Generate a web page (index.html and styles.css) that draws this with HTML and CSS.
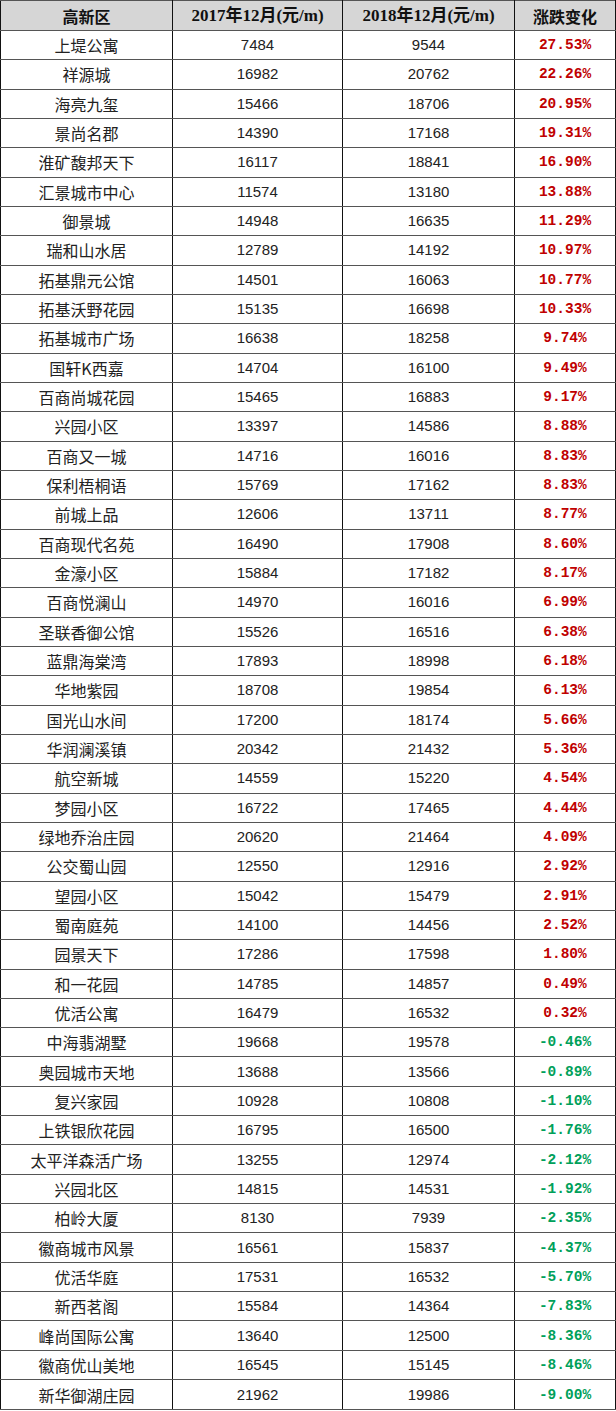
FILE: index.html
```html
<!DOCTYPE html>
<html lang="zh-CN">
<head>
<meta charset="utf-8">
<title>高新区房价涨跌</title>
<link rel="stylesheet" href="styles.css">
</head>
<body>
<table class="price-table">
  <colgroup>
    <col class="c-name"><col class="c-y1"><col class="c-y2"><col class="c-chg">
  </colgroup>
  <thead>
    <tr><th class="h-cn">高新区</th><th class="h-year">2017年12月(元/m)</th><th class="h-year">2018年12月(元/m)</th><th class="h-cn">涨跌变化</th></tr>
  </thead>
  <tbody>
    <tr><td class="name">上堤公寓</td><td class="num">7484</td><td class="num">9544</td><td class="pct up">27.53%</td></tr>
    <tr><td class="name">祥源城</td><td class="num">16982</td><td class="num">20762</td><td class="pct up">22.26%</td></tr>
    <tr><td class="name">海亮九玺</td><td class="num">15466</td><td class="num">18706</td><td class="pct up">20.95%</td></tr>
    <tr><td class="name">景尚名郡</td><td class="num">14390</td><td class="num">17168</td><td class="pct up">19.31%</td></tr>
    <tr><td class="name">淮矿馥邦天下</td><td class="num">16117</td><td class="num">18841</td><td class="pct up">16.90%</td></tr>
    <tr><td class="name">汇景城市中心</td><td class="num">11574</td><td class="num">13180</td><td class="pct up">13.88%</td></tr>
    <tr><td class="name">御景城</td><td class="num">14948</td><td class="num">16635</td><td class="pct up">11.29%</td></tr>
    <tr><td class="name">瑞和山水居</td><td class="num">12789</td><td class="num">14192</td><td class="pct up">10.97%</td></tr>
    <tr><td class="name">拓基鼎元公馆</td><td class="num">14501</td><td class="num">16063</td><td class="pct up">10.77%</td></tr>
    <tr><td class="name">拓基沃野花园</td><td class="num">15135</td><td class="num">16698</td><td class="pct up">10.33%</td></tr>
    <tr><td class="name">拓基城市广场</td><td class="num">16638</td><td class="num">18258</td><td class="pct up">9.74%</td></tr>
    <tr><td class="name">国轩K西嘉</td><td class="num">14704</td><td class="num">16100</td><td class="pct up">9.49%</td></tr>
    <tr><td class="name">百商尚城花园</td><td class="num">15465</td><td class="num">16883</td><td class="pct up">9.17%</td></tr>
    <tr><td class="name">兴园小区</td><td class="num">13397</td><td class="num">14586</td><td class="pct up">8.88%</td></tr>
    <tr><td class="name">百商又一城</td><td class="num">14716</td><td class="num">16016</td><td class="pct up">8.83%</td></tr>
    <tr><td class="name">保利梧桐语</td><td class="num">15769</td><td class="num">17162</td><td class="pct up">8.83%</td></tr>
    <tr><td class="name">前城上品</td><td class="num">12606</td><td class="num">13711</td><td class="pct up">8.77%</td></tr>
    <tr><td class="name">百商现代名苑</td><td class="num">16490</td><td class="num">17908</td><td class="pct up">8.60%</td></tr>
    <tr><td class="name">金濠小区</td><td class="num">15884</td><td class="num">17182</td><td class="pct up">8.17%</td></tr>
    <tr><td class="name">百商悦澜山</td><td class="num">14970</td><td class="num">16016</td><td class="pct up">6.99%</td></tr>
    <tr><td class="name">圣联香御公馆</td><td class="num">15526</td><td class="num">16516</td><td class="pct up">6.38%</td></tr>
    <tr><td class="name">蓝鼎海棠湾</td><td class="num">17893</td><td class="num">18998</td><td class="pct up">6.18%</td></tr>
    <tr><td class="name">华地紫园</td><td class="num">18708</td><td class="num">19854</td><td class="pct up">6.13%</td></tr>
    <tr><td class="name">国光山水间</td><td class="num">17200</td><td class="num">18174</td><td class="pct up">5.66%</td></tr>
    <tr><td class="name">华润澜溪镇</td><td class="num">20342</td><td class="num">21432</td><td class="pct up">5.36%</td></tr>
    <tr><td class="name">航空新城</td><td class="num">14559</td><td class="num">15220</td><td class="pct up">4.54%</td></tr>
    <tr><td class="name">梦园小区</td><td class="num">16722</td><td class="num">17465</td><td class="pct up">4.44%</td></tr>
    <tr><td class="name">绿地乔治庄园</td><td class="num">20620</td><td class="num">21464</td><td class="pct up">4.09%</td></tr>
    <tr><td class="name">公交蜀山园</td><td class="num">12550</td><td class="num">12916</td><td class="pct up">2.92%</td></tr>
    <tr><td class="name">望园小区</td><td class="num">15042</td><td class="num">15479</td><td class="pct up">2.91%</td></tr>
    <tr><td class="name">蜀南庭苑</td><td class="num">14100</td><td class="num">14456</td><td class="pct up">2.52%</td></tr>
    <tr><td class="name">园景天下</td><td class="num">17286</td><td class="num">17598</td><td class="pct up">1.80%</td></tr>
    <tr><td class="name">和一花园</td><td class="num">14785</td><td class="num">14857</td><td class="pct up">0.49%</td></tr>
    <tr><td class="name">优活公寓</td><td class="num">16479</td><td class="num">16532</td><td class="pct up">0.32%</td></tr>
    <tr><td class="name">中海翡湖墅</td><td class="num">19668</td><td class="num">19578</td><td class="pct down">-0.46%</td></tr>
    <tr><td class="name">奥园城市天地</td><td class="num">13688</td><td class="num">13566</td><td class="pct down">-0.89%</td></tr>
    <tr><td class="name">复兴家园</td><td class="num">10928</td><td class="num">10808</td><td class="pct down">-1.10%</td></tr>
    <tr><td class="name">上铁银欣花园</td><td class="num">16795</td><td class="num">16500</td><td class="pct down">-1.76%</td></tr>
    <tr><td class="name">太平洋森活广场</td><td class="num">13255</td><td class="num">12974</td><td class="pct down">-2.12%</td></tr>
    <tr><td class="name">兴园北区</td><td class="num">14815</td><td class="num">14531</td><td class="pct down">-1.92%</td></tr>
    <tr><td class="name">柏岭大厦</td><td class="num">8130</td><td class="num">7939</td><td class="pct down">-2.35%</td></tr>
    <tr><td class="name">徽商城市风景</td><td class="num">16561</td><td class="num">15837</td><td class="pct down">-4.37%</td></tr>
    <tr><td class="name">优活华庭</td><td class="num">17531</td><td class="num">16532</td><td class="pct down">-5.70%</td></tr>
    <tr><td class="name">新西茗阁</td><td class="num">15584</td><td class="num">14364</td><td class="pct down">-7.83%</td></tr>
    <tr><td class="name">峰尚国际公寓</td><td class="num">13640</td><td class="num">12500</td><td class="pct down">-8.36%</td></tr>
    <tr><td class="name">徽商优山美地</td><td class="num">16545</td><td class="num">15145</td><td class="pct down">-8.46%</td></tr>
    <tr><td class="name">新华御湖庄园</td><td class="num">21962</td><td class="num">19986</td><td class="pct down">-9.00%</td></tr>
  </tbody>
</table>
</body>
</html>
```

FILE: styles.css
```css
html, body {
  margin: 0;
  padding: 0;
  background: #ffffff;
}

.price-table {
  width: 615px;
  height: 1410px;
  border-collapse: collapse;
  table-layout: fixed;
  font-family: "Noto Sans CJK SC", "Liberation Sans", sans-serif;
  font-size: 16px;
  color: #1a1a1a;
  border: 1px solid #222;
}

.c-name { width: 172px; }
.c-y1 { width: 170px; }
.c-y2 { width: 172px; }
.c-chg { width: 101px; }

.price-table th,
.price-table td {
  padding: 0;
  text-align: center;
  vertical-align: middle;
  line-height: 20px;
  border-left: 1px solid #111;
  border-right: 1px solid #111;
  border-top: 1px solid #555;
  border-bottom: 1px solid #555;
  white-space: nowrap;
}

.price-table thead th {
  background: #d6d6d6;
  font-weight: 700;
  color: #111;
  height: 29px;
}

.h-cn {
  font-family: "Noto Sans CJK SC", sans-serif;
  font-size: 16px;
}

.h-year {
  font-family: "Liberation Serif", "Noto Sans CJK SC", serif;
  font-size: 17px;
}

.name {
  font-family: "Noto Sans CJK SC", sans-serif;
  font-size: 16px;
  font-weight: 400;
  color: #222;
}

.num {
  font-family: "Liberation Sans", sans-serif;
  font-size: 15px;
  color: #222;
}

.pct {
  font-family: "Liberation Mono", monospace;
  font-weight: 700;
  font-size: 14.5px;
}

.up { color: #c00000; }
.down { color: #00a05a; }
```
